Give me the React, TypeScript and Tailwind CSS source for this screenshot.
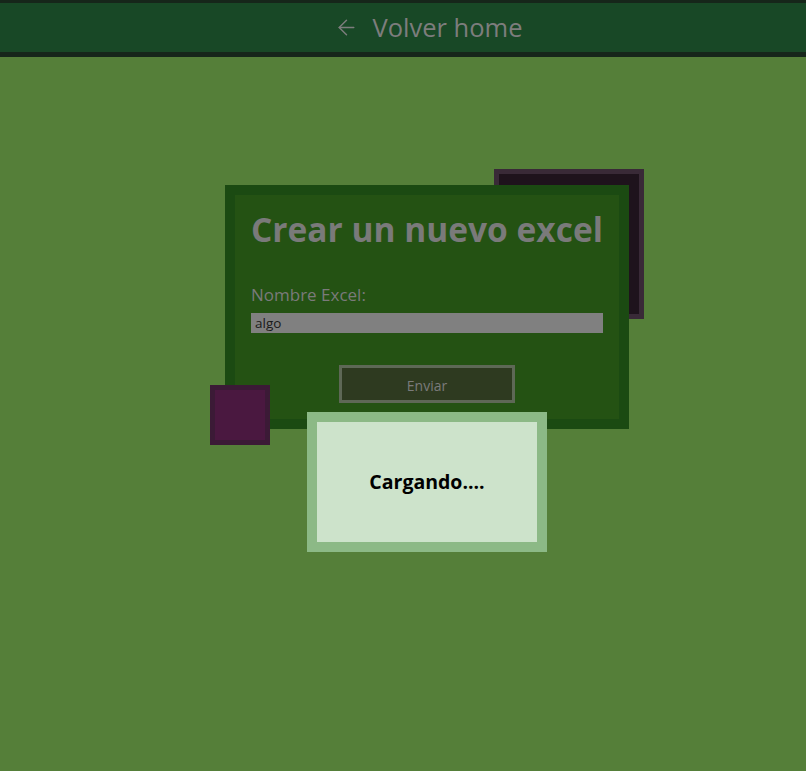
import { ArrowLeft } from "lucide-react";

const font = { fontFamily: '"Open Sans", "Noto Sans", sans-serif' };

export default function App() {
  return (
    <div className="min-h-screen bg-[#557f39]" style={font}>
      <header className="flex h-[57px] items-center justify-center border-t-[3px] border-b-[5px] border-[#16261a] bg-[#184826] pl-[50px]">
        <a href="#" className="flex items-center gap-[14px] text-[#7d7d7d]">
          <ArrowLeft size={25} strokeWidth={1.4} />
          <span className="text-[25.5px] leading-none">Volver home</span>
        </a>
      </header>

      <main className="pl-[225px] pt-[128px]">
        <div className="relative w-[404px]">
          <div className="absolute left-[269px] top-[-16px] h-[150px] w-[150px] border-[5px] border-[#392a37] bg-[#1e131c]" />

          <form className="relative z-10 h-[244px] border-[10px] border-[#1b4a12] bg-[#245213] px-[16px] pt-[14px]">
            <h1 className="text-[33.5px] font-bold leading-[40px] text-[#7a7a7a]">Crear un nuevo excel</h1>
            <label className="mt-[36px] block text-[17px] leading-[20px] text-[#7a7a7a]">Nombre Excel:</label>
            <input
              defaultValue="algo"
              className="mt-[8px] block h-[20px] w-[352px] bg-[#808080] px-[4px] text-[13.5px] text-[#1a1a1a] outline-none"
            />
            <div className="mt-[32px] flex justify-center">
              <button
                type="button"
                className="h-[38px] w-[176px] border-[3px] border-[#5e6856] bg-[#2e3a20] pt-[2px] text-[14px] text-[#7b7b7b]"
              >
                Enviar
              </button>
            </div>
          </form>

          <div className="absolute left-[-15px] top-[200px] z-20 h-[60px] w-[60px] border-[5px] border-[#3b1a36] bg-[#4a1840]" />

          <div className="absolute left-[82px] top-[227px] z-20 flex h-[140px] w-[240px] items-center justify-center border-[10px] border-[#8cb986] bg-[#cde3cb]">
            <span className="text-[19.5px] font-bold text-black">Cargando....</span>
          </div>
        </div>
      </main>
    </div>
  );
}
